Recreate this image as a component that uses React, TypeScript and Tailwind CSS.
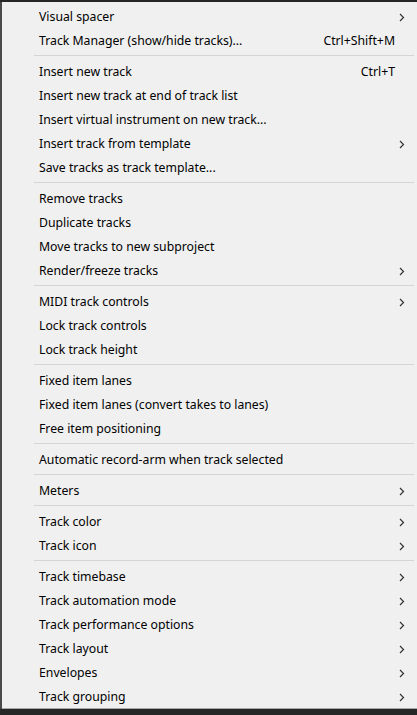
type Item = { label: string; shortcut?: string; sub?: boolean };

const groups: Item[][] = [
  [
    { label: "Visual spacer", sub: true },
    { label: "Track Manager (show/hide tracks)...", shortcut: "Ctrl+Shift+M" },
  ],
  [
    { label: "Insert new track", shortcut: "Ctrl+T" },
    { label: "Insert new track at end of track list" },
    { label: "Insert virtual instrument on new track..." },
    { label: "Insert track from template", sub: true },
    { label: "Save tracks as track template..." },
  ],
  [
    { label: "Remove tracks" },
    { label: "Duplicate tracks" },
    { label: "Move tracks to new subproject" },
    { label: "Render/freeze tracks", sub: true },
  ],
  [
    { label: "MIDI track controls", sub: true },
    { label: "Lock track controls" },
    { label: "Lock track height" },
  ],
  [
    { label: "Fixed item lanes" },
    { label: "Fixed item lanes (convert takes to lanes)" },
    { label: "Free item positioning" },
  ],
  [{ label: "Automatic record-arm when track selected" }],
  [{ label: "Meters", sub: true }],
  [
    { label: "Track color", sub: true },
    { label: "Track icon", sub: true },
  ],
  [
    { label: "Track timebase", sub: true },
    { label: "Track automation mode", sub: true },
    { label: "Track performance options", sub: true },
    { label: "Track layout", sub: true },
    { label: "Envelopes", sub: true },
    { label: "Track grouping", sub: true },
  ],
];

function Chevron() {
  return (
    <svg width="6" height="9" viewBox="0 0 6 9" className="text-[#333]">
      <polyline points="1,1 4.5,4.5 1,8" fill="none" stroke="currentColor" strokeWidth="1.2" />
    </svg>
  );
}

function Row({ item }: { item: Item }) {
  return (
    <div className="h-6 flex items-center pt-[2px] pl-[37px] pr-[10px]">
      <span className="flex-1 whitespace-nowrap">{item.label}</span>
      {item.shortcut && <span className="whitespace-nowrap pr-[12px]">{item.shortcut}</span>}
      {item.sub && (
        <span className="w-[10px] flex justify-center">
          <Chevron />
        </span>
      )}
    </div>
  );
}

export default function App() {
  return (
    <div className="w-[417px] h-[715px] bg-[#262626] overflow-hidden flex">
      <div className="w-[2px] bg-[#4a4a4a] mt-[2px] h-[707px]" />
      <div
        className="flex-1 mt-[2px] h-[707px] bg-[#f0f0f0] border-b border-[#a8a8a8] pt-[2px] text-[12.25px] text-black"
        style={{ fontFamily: '"Noto Sans", "Segoe UI", sans-serif' }}
      >
        {groups.map((g, i) => (
          <div key={i}>
            {i > 0 && (
              <div className="h-[7px] flex items-center pl-[32px] pr-[3px]">
                <div className="h-px w-full bg-[#d5d5d5]" />
              </div>
            )}
            {g.map((item) => (
              <Row key={item.label} item={item} />
            ))}
          </div>
        ))}
      </div>
    </div>
  );
}
